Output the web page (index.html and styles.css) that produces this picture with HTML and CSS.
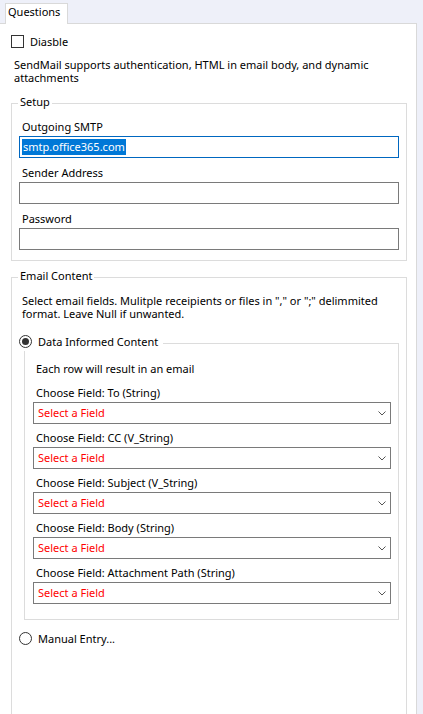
FILE: index.html
```html
<!DOCTYPE html>
<html>
<head>
<meta charset="utf-8">
<link rel="stylesheet" href="styles.css">
</head>
<body>
<div class="window">
  <div class="tabbar"><div class="tab">Questions</div></div>
  <div class="panel">
    <div class="check-row"><span class="checkbox"></span><span>Diasble</span></div>
    <p class="intro">SendMail supports authentication, HTML in email body, and dynamic attachments</p>

    <fieldset class="group">
      <legend>Setup</legend>
      <div class="field-label first">Outgoing SMTP</div>
      <div class="textbox focused"><span class="selected">smtp.office365.com</span></div>
      <div class="field-label">Sender Address</div>
      <div class="textbox"></div>
      <div class="field-label">Password</div>
      <div class="textbox"></div>
    </fieldset>

    <fieldset class="group content">
      <legend>Email Content</legend>
      <p class="hint">Select email fields. Mulitple receipients or files in "," or ";" delimmited format. Leave Null if unwanted.</p>
      <fieldset class="subgroup">
        <legend class="radio-legend"><span class="radio checked"></span><span>Data Informed Content</span></legend>
        <div class="sub-note">Each row will result in an email</div>
        <div class="select-label">Choose Field: To (String)</div>
        <div class="select"><span>Select a Field</span><svg class="chev" width="8" height="5" viewBox="0 0 8 5"><polyline points="0.5,0.5 4,4 7.5,0.5" fill="none" stroke="#555" stroke-width="1"/></svg></div>
        <div class="select-label">Choose Field: CC (V_String)</div>
        <div class="select"><span>Select a Field</span><svg class="chev" width="8" height="5" viewBox="0 0 8 5"><polyline points="0.5,0.5 4,4 7.5,0.5" fill="none" stroke="#555" stroke-width="1"/></svg></div>
        <div class="select-label">Choose Field: Subject (V_String)</div>
        <div class="select"><span>Select a Field</span><svg class="chev" width="8" height="5" viewBox="0 0 8 5"><polyline points="0.5,0.5 4,4 7.5,0.5" fill="none" stroke="#555" stroke-width="1"/></svg></div>
        <div class="select-label">Choose Field: Body (String)</div>
        <div class="select"><span>Select a Field</span><svg class="chev" width="8" height="5" viewBox="0 0 8 5"><polyline points="0.5,0.5 4,4 7.5,0.5" fill="none" stroke="#555" stroke-width="1"/></svg></div>
        <div class="select-label">Choose Field: Attachment Path (String)</div>
        <div class="select"><span>Select a Field</span><svg class="chev" width="8" height="5" viewBox="0 0 8 5"><polyline points="0.5,0.5 4,4 7.5,0.5" fill="none" stroke="#555" stroke-width="1"/></svg></div>
      </fieldset>
      <div class="radio-row"><span class="radio"></span><span>Manual Entry...</span></div>
    </fieldset>
  </div>
</div>
</body>
</html>
```
FILE: styles.css
```css
html, body {
  margin: 0;
  padding: 0;
}
body {
  background: #eef0f9;
  font-family: "Noto Sans", "Open Sans", sans-serif;
  font-size: 11px;
  line-height: 13px;
  color: #000;
  width: 423px;
  height: 714px;
  overflow: hidden;
}
.window {
  width: 417px;
}
.tabbar {
  height: 23px;
  border-bottom: 1px solid #d9d9d9;
  display: flex;
  align-items: flex-end;
  padding-left: 5px;
}
.tab {
  box-sizing: border-box;
  height: 21px;
  margin-bottom: -1px;
  background: #fff;
  border: 1px solid #d9d9d9;
  border-bottom: 0;
  padding: 1px 7px 0 2px;
}
.panel {
  box-sizing: border-box;
  width: 417px;
  height: 700px;
  background: #fff;
  border-right: 1px solid #d9d9d9;
  padding: 0 9px 0 11px;
  overflow: hidden;
}
.check-row {
  display: flex;
  align-items: center;
  gap: 6px;
  margin-top: 11px;
}
.checkbox {
  box-sizing: border-box;
  width: 13px;
  height: 13px;
  border: 1px solid #333;
  background: #fff;
}
.intro {
  margin: 10px 0 0 3px;
}
.group {
  margin: 11px 0 0 0;
  border: 1px solid #dcdcdc;
  padding: 0 7px 10px 7px;
  min-inline-size: 0;
}
.group > legend {
  padding: 0 2px 3px 2px;
  margin-left: -1px;
  line-height: 13px;
}
.field-label {
  margin: 8px 0 3px 3px;
}
.field-label.first {
  margin-top: 9px;
}
.textbox {
  box-sizing: border-box;
  height: 22px;
  border: 1px solid #7a7a7a;
  padding: 2px 2px 0 2px;
}
.textbox.focused {
  border-color: #0067c0;
}
.selected {
  display: inline-block;
  background: #0078d7;
  color: #fff;
  line-height: 16px;
  padding: 0 1px;
}
.group.content {
  margin-top: 8px;
  padding-bottom: 120px;
}
.hint {
  margin: 9px 0 0 3px;
}
.subgroup {
  margin: 15px 0 0 5px;
  border: 1px solid #dcdcdc;
  padding: 0 7px 15px 8px;
  min-inline-size: 0;
}
.radio-legend {
  display: flex;
  align-items: flex-start;
  gap: 6px;
  margin-left: -14px;
  padding: 0 5px 3px 0;
  line-height: 13px;
}
.radio {
  box-sizing: border-box;
  width: 13px;
  height: 13px;
  border: 1px solid #333;
  border-radius: 50%;
  background: #fff;
  display: flex;
  align-items: center;
  justify-content: center;
  flex: none;
}
.radio.checked::after {
  content: "";
  width: 7px;
  height: 7px;
  border-radius: 50%;
  background: #333;
}
.sub-note {
  margin: 11px 0 0 3px;
}
.select-label {
  margin: 11px 0 3px 3px;
}
.select + .select-label {
  margin-top: 7px;
}
.select {
  box-sizing: border-box;
  height: 22px;
  border: 1px solid #7a7a7a;
  padding: 0 4px 0 4px;
  display: flex;
  align-items: center;
  justify-content: space-between;
  color: #ff0000;
  line-height: 20px;
}
.chev {
  display: block;
}
.radio-row {
  display: flex;
  align-items: center;
  gap: 6px;
  margin-top: 12px;
}
```
